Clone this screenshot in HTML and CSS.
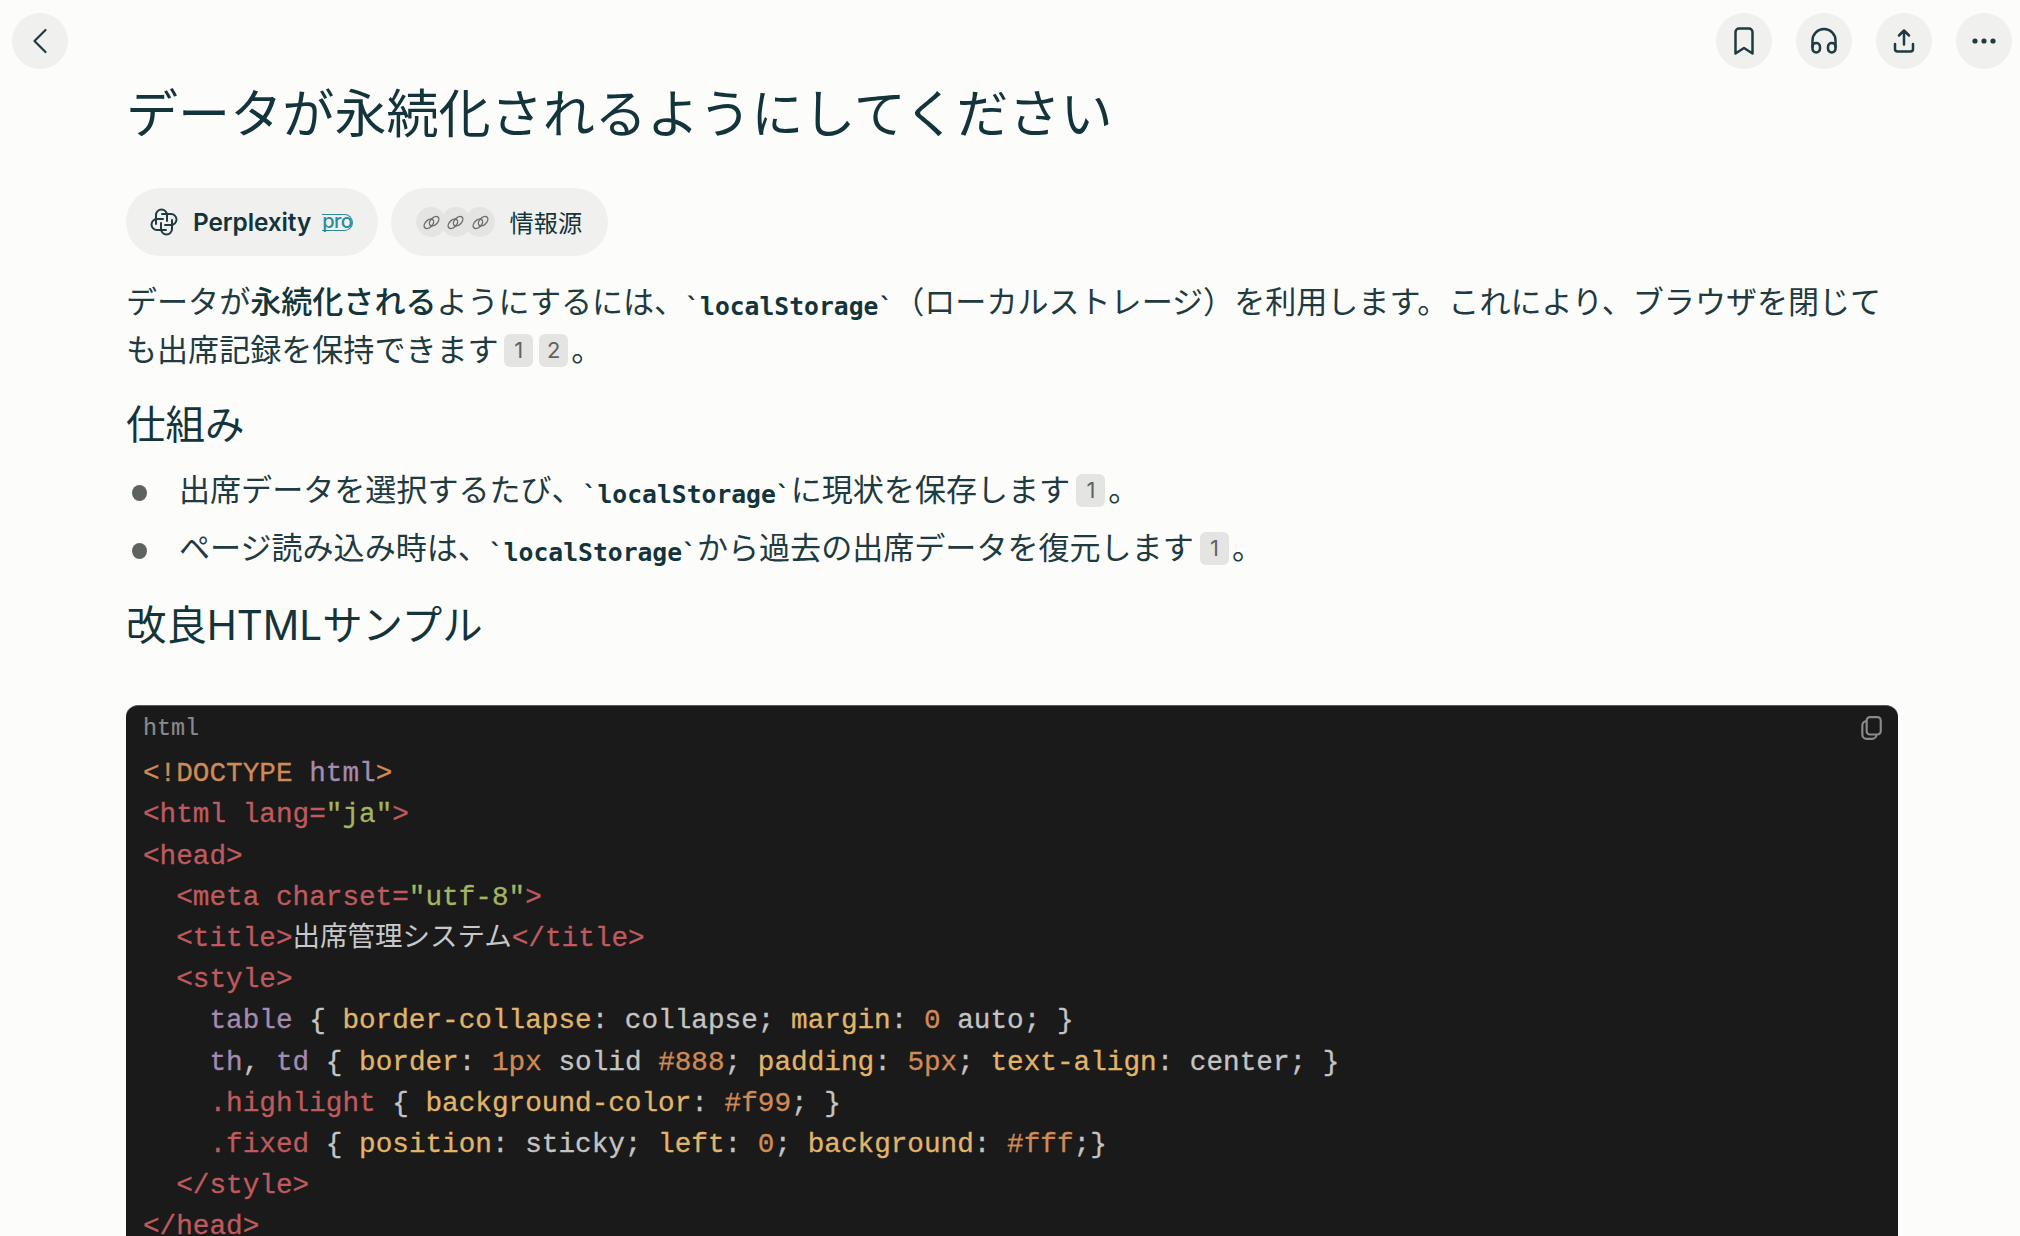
FILE: index.html
```html
<!DOCTYPE html>
<html lang="ja">
<head>
<meta charset="utf-8">
<title>データが永続化されるようにしてください</title>
<link rel="stylesheet" href="styles.css">
</head>
<body>
<div class="page">
  <header class="topbar">
    <button class="round" aria-label="戻る">
      <svg class="ic ic-thin" viewBox="0 0 32 32"><path d="M21.500 5 10.500 16l11 11"/></svg>
    </button>
    <div class="actions">
      <button class="round" aria-label="ブックマーク">
        <svg class="ic" viewBox="0 0 32 32"><path d="M7.500 28.500V7A3.500 3.500 0 0 1 11 3.500h10A3.500 3.500 0 0 1 24.500 7V28.500L16 23z"/></svg>
      </button>
      <button class="round" aria-label="音声">
        <svg class="ic" viewBox="0 0 32 32"><path d="M4.500 22v-6.500a11.500 11.500 0 0 1 23 0V22"/><rect x="4.500" y="18" width="7.500" height="9.500" rx="3.700"/><rect x="20" y="18" width="7.500" height="9.500" rx="3.700"/></svg>
      </button>
      <button class="round" aria-label="共有">
        <svg class="ic" viewBox="0 0 32 32"><path d="M16 19.500V6M11 10.500 16 5.500 21 10.500M7 19v5a2.500 2.500 0 0 0 2.500 2.500h13a2.500 2.500 0 0 0 2.500-2.500v-5"/></svg>
      </button>
      <button class="round" aria-label="その他">
        <svg class="ic dots" viewBox="0 0 32 32"><circle cx="7" cy="16" r="2.600"/><circle cx="16" cy="16" r="2.600"/><circle cx="25" cy="16" r="2.600"/></svg>
      </button>
    </div>
  </header>

  <main class="content">
    <h1 class="title">データが永続化されるようにしてください</h1>

    <div class="pills">
      <div class="pill pill-model">
        <svg class="plx" viewBox="0 0 28 28">
          <path d="M6 16V7a5.500 5.500 0 0 1 11 0V13"/>
          <path transform="rotate(90 14 14)" d="M6 16V7a5.500 5.500 0 0 1 11 0V13"/>
          <path transform="rotate(180 14 14)" d="M6 16V7a5.500 5.500 0 0 1 11 0V13"/>
          <path transform="rotate(270 14 14)" d="M6 16V7a5.500 5.500 0 0 1 11 0V13"/>
        </svg>
        <span class="pill-name">Perplexity</span>
        <span class="pro">pro</span>
      </div>
      <div class="pill pill-src">
        <span class="links">
          <span class="link"><svg viewBox="0 0 24 24"><ellipse cx="9" cy="13.500" rx="6.500" ry="4" transform="rotate(-45 9 13.500)"/><ellipse cx="15" cy="10.500" rx="6.500" ry="4" transform="rotate(-45 15 10.500)"/></svg></span>
          <span class="link"><svg viewBox="0 0 24 24"><ellipse cx="9" cy="13.500" rx="6.500" ry="4" transform="rotate(-45 9 13.500)"/><ellipse cx="15" cy="10.500" rx="6.500" ry="4" transform="rotate(-45 15 10.500)"/></svg></span>
          <span class="link"><svg viewBox="0 0 24 24"><ellipse cx="9" cy="13.500" rx="6.500" ry="4" transform="rotate(-45 9 13.500)"/><ellipse cx="15" cy="10.500" rx="6.500" ry="4" transform="rotate(-45 15 10.500)"/></svg></span>
        </span>
        <span class="pill-label">情報源</span>
      </div>
    </div>

    <p class="para">データが<strong>永続化される</strong>ようにするには、<code class="inl">`localStorage`</code>（ローカルストレージ）を利用します。これにより、ブラウザを閉じても出席記録を保持できます <span class="cite">1</span><span class="cite">2</span>。</p>

    <h2 class="sub">仕組み</h2>
    <ul class="list">
      <li>出席データを選択するたび、<code class="inl">`localStorage`</code>に現状を保存します <span class="cite">1</span>。</li>
      <li>ページ読み込み時は、<code class="inl">`localStorage`</code>から過去の出席データを復元します <span class="cite">1</span>。</li>
    </ul>

    <h2 class="sub sub-2">改良HTMLサンプル</h2>

    <section class="code">
      <div class="code-head">
        <span class="lang">html</span>
        <svg class="copy" viewBox="0 0 24 24"><rect x="8" y="2" width="13" height="16" rx="3"/><path d="M8 5.500A4 4 0 0 0 4 9.500V18a4 4 0 0 0 4 4h5a4 4 0 0 0 4-4"/></svg>
      </div>
<pre class="src"><span class="o">&lt;!DOCTYPE</span> <span class="p">html</span><span class="o">&gt;</span>
<span class="r">&lt;html lang=</span><span class="g">"ja"</span><span class="r">&gt;</span>
<span class="r">&lt;head&gt;</span>
  <span class="r">&lt;meta charset=</span><span class="g">"utf-8"</span><span class="r">&gt;</span>
  <span class="r">&lt;title&gt;</span><span class="cjk">出席管理システム</span><span class="r">&lt;/title&gt;</span>
  <span class="r">&lt;style&gt;</span>
    <span class="p">table</span> { <span class="y">border-collapse</span>: collapse; <span class="y">margin</span>: <span class="o">0</span> auto; }
    <span class="p">th</span>, <span class="p">td</span> { <span class="y">border</span>: <span class="o">1px</span> solid <span class="o">#888</span>; <span class="y">padding</span>: <span class="o">5px</span>; <span class="y">text-align</span>: center; }
    <span class="r">.highlight</span> { <span class="y">background-color</span>: <span class="o">#f99</span>; }
    <span class="r">.fixed</span> { <span class="y">position</span>: sticky; <span class="y">left</span>: <span class="o">0</span>; <span class="y">background</span>: <span class="o">#fff</span>;}
  <span class="r">&lt;/style&gt;</span>
<span class="r">&lt;/head&gt;</span></pre>
    </section>
  </main>
</div>
</body>
</html>
```

FILE: styles.css
```css
* { box-sizing: border-box; }
html, body { margin: 0; height: 100%; }
body {
  background: #fcfdfa;
  color: #13343b;
  font-family: "Inter", "Noto Sans CJK JP", sans-serif;
  overflow: hidden;
}
.page { height: 1236px; overflow: hidden; }

.topbar {
  display: flex;
  justify-content: space-between;
  padding: 13px 8px 0 12px;
  height: 69px;
}
.actions { display: flex; gap: 24px; }
.round {
  width: 56px;
  height: 56px;
  border: 0;
  padding: 0;
  border-radius: 50%;
  background: #f0f1ee;
  display: flex;
  align-items: center;
  justify-content: center;
}
.ic {
  width: 32px;
  height: 32px;
  fill: none;
  stroke: #1f3a40;
  stroke-width: 2.500;
  stroke-linecap: round;
  stroke-linejoin: round;
}
.ic-thin { stroke-width: 2.200; }
.ic.dots { fill: #1f3a40; stroke: none; }

.content { padding: 0 122px 0 126px; }
.title {
  margin: 15px 0 0;
  font: 400 52.100px/62px "Inter", "Noto Sans CJK JP", sans-serif;
  color: #13343b;
}

.pills { display: flex; gap: 13px; margin-top: 42px; }
.pill {
  height: 68px;
  border-radius: 34px;
  background: #f0f1ee;
  display: flex;
  align-items: center;
}
.pill-model { width: 252px; padding-left: 24px; }
.pill-src { width: 217px; padding-left: 25px; }
.plx {
  width: 28px;
  height: 28px;
  fill: none;
  stroke: #1f3a40;
  stroke-width: 2;
  stroke-linejoin: round;
  stroke-linecap: round;
}
.pill-name {
  margin-left: 15px;
  font: 600 24.400px/1 "Inter", sans-serif;
  letter-spacing: -0.100px;
}
.pro {
  margin-left: 11px;
  width: 31px;
  height: 17px;
  border: 1.500px solid #2d8a9c;
  border-left: 0;
  border-radius: 0 9px 9px 0;
  color: #2d8a9c;
  font: 500 20px/13px "Inter", sans-serif;
  letter-spacing: -0.500px;
}
.links { display: flex; }
.link {
  width: 30px;
  height: 30px;
  margin-right: -5.500px;
  border-radius: 50%;
  background: #e4e5e2;
  display: flex;
  align-items: center;
  justify-content: center;
}
.link svg {
  width: 21px;
  height: 21px;
  fill: none;
  stroke: #6a6c6a;
  stroke-width: 1.600;
}
.pill-label {
  margin-left: 20px;
  font: 400 24.200px/1 "Noto Sans CJK JP", sans-serif;
}

.para {
  margin: 22px 0 0;
  font: 400 31.050px/47.600px "Inter", "Noto Sans CJK JP", sans-serif;
  word-spacing: -6px;
  color: #1f3a40;
}
.para strong { font-weight: 500; color: #13343b; }
.inl {
  font: 700 24.700px/1 "DejaVu Sans Mono", monospace;
  color: #13343b;
  vertical-align: -2px;
}
.cite {
  display: inline-block;
  width: 29px;
  height: 33px;
  margin: 8px 3px 0;
  border-radius: 6px;
  background: #e4e5e2;
  color: #5f6360;
  font: 400 22px/33px "Inter", sans-serif;
  text-align: center;
  vertical-align: top;
}

.sub {
  margin: 26px 0 0;
  font: 400 39.500px/52px "Inter", "Noto Sans CJK JP", sans-serif;
  color: #13343b;
}
.sub-2 { margin-top: 28px; font-size: 40.400px; }

.list { list-style: none; margin: 15px 0 0; padding: 0; }
.list li {
  position: relative;
  padding-left: 53px;
  margin-bottom: 10px;
  font: 400 31.050px/48px "Inter", "Noto Sans CJK JP", sans-serif;
  word-spacing: -5.500px;
  color: #1f3a40;
}
.list li::before {
  content: "";
  position: absolute;
  left: 6px;
  top: 19px;
  width: 15px;
  height: 16px;
  border-radius: 50%;
  background: #5f6360;
}

.code {
  margin-top: 53px;
  border-radius: 12px 12px 0 0;
  background: #1a1a1a;
  border-top: 1px solid #5a5a5a;
  padding: 0 16px 0 17px;
  height: 560px;
}
.code-head {
  display: flex;
  justify-content: space-between;
  align-items: center;
  height: 44px;
}
.lang {
  margin-top: 4px;
  font: 400 23.400px/1 "Liberation Mono", monospace;
  color: #8a8a8a;
  -webkit-text-stroke: 0.200px #8a8a8a;
}
.copy {
  width: 26px;
  height: 26px;
  margin-right: -2px;
  fill: none;
  stroke: #8a8a8a;
  stroke-width: 2;
}
.src {
  margin: 3px 0 0;
  font: 400 27.700px/41.200px "Liberation Mono", monospace;
  color: #c4c4c4;
  white-space: pre;
  -webkit-text-stroke: 0.300px;
}
.cjk { font-family: "Noto Sans CJK JP", sans-serif; font-size: 27.500px; color: #c8c8c8; line-height: 1; -webkit-text-stroke: 0; }
.o { color: #d08a55; }
.p { color: #a48bb0; }
.r { color: #bf5a5e; }
.g { color: #a3b462; }
.y { color: #e0b56a; }
```
